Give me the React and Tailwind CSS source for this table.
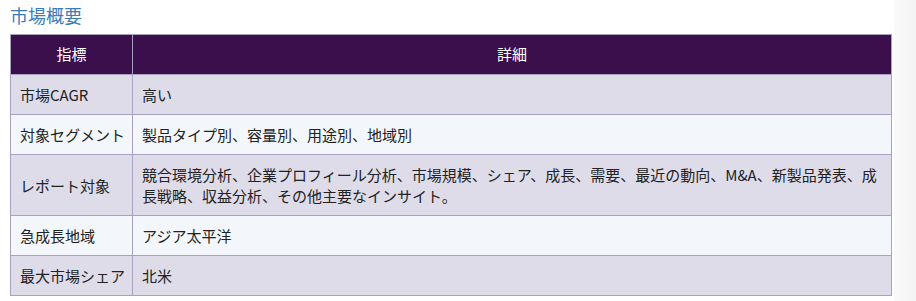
export default function App() {
  const rows = [
    ["市場CAGR", "高い"],
    ["対象セグメント", "製品タイプ別、容量別、用途別、地域別"],
    ["レポート対象", "競合環境分析、企業プロフィール分析、市場規模、シェア、成長、需要、最近の動向、M&A、新製品発表、成長戦略、収益分析、その他主要なインサイト。"],
    ["急成長地域", "アジア太平洋"],
    ["最大市場シェア", "北米"],
  ];
  return (
    <div className="relative w-[916px] h-[301px] overflow-hidden bg-white" style={{ fontFamily: '"Noto Sans CJK JP", "Noto Sans", sans-serif' }}>
      <div className="absolute right-0 top-0 h-full w-[22px] bg-gradient-to-r from-[#fafafa] to-[#f3f3f3]" />
      <div className="pl-[10px] pr-[24px]">
        <h2 className="text-[18px] leading-[24px] pt-[3px] h-[34px] text-[#3a7bbd] font-normal">市場概要</h2>
        <table className="w-[882px] border-collapse text-[15px] text-[#222]">
          <thead>
            <tr className="bg-[#3a0f4c] text-white h-[40px]">
              <th className="w-[122px] border border-[#a9a1c3] font-normal text-center">指標</th>
              <th className="border border-[#a9a1c3] font-normal text-center">詳細</th>
            </tr>
          </thead>
          <tbody>
            {rows.map((r, i) => (
              <tr key={i} className={i % 2 === 0 ? "bg-[#dfdcea]" : "bg-[#f3f7fb]"}>
                <td className="border border-[#a9a1c3] pl-[9px] pr-[4px] py-[9px] leading-[21px] align-middle whitespace-nowrap">{r[0]}</td>
                <td className="border border-[#a9a1c3] px-[9px] py-[9px] leading-[21px] align-middle">{r[1]}</td>
              </tr>
            ))}
          </tbody>
        </table>
      </div>
    </div>
  );
}
